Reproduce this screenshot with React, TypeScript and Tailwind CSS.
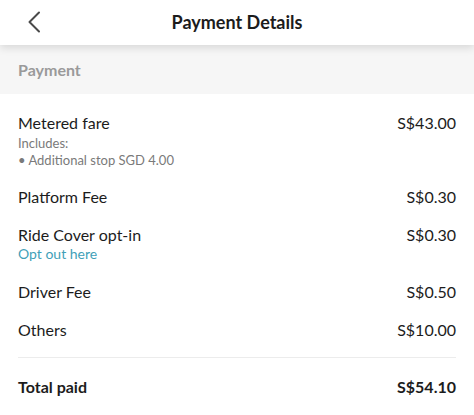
export default function App() {
  const font = { fontFamily: "Lato, 'Noto Sans', sans-serif" };
  return (
    <div className="w-[474px] h-[415px] overflow-hidden bg-white text-[#1c1c1c]" style={font}>
      <div className="relative z-10 flex h-[45px] items-center justify-center bg-white shadow-[0_3px_8px_rgba(0,0,0,0.12)]">
        <svg className="absolute left-[26px] top-[11px]" width="18" height="22" viewBox="0 0 18 22" fill="none">
          <path d="M13 1.5 L3.5 11 L13 20.5" stroke="#4a4a4a" strokeWidth="2" strokeLinecap="round" strokeLinejoin="round" />
        </svg>
        <h1 className="text-[18px] font-bold">Payment Details</h1>
      </div>
      <div className="flex h-[49px] items-center bg-[#f6f6f6] px-[18px]">
        <span className="text-[16px] font-bold text-[#9a9a9a]">Payment</span>
      </div>
      <div className="px-[18px] pt-[19px]">
        <div className="flex justify-between text-[16px] leading-[20px]">
          <span>Metered fare</span>
          <span>S$43.00</span>
        </div>
        <div className="mt-[2px] text-[13px] leading-[17px] text-[#7a7a7a]">Includes:</div>
        <div className="text-[13px] leading-[17px] text-[#7a7a7a]">• Additional stop SGD 4.00</div>
        <div className="mt-[18px] flex justify-between text-[16px] leading-[20px]">
          <span>Platform Fee</span>
          <span>S$0.30</span>
        </div>
        <div className="mt-[18px] flex justify-between text-[16px] leading-[20px]">
          <span>Ride Cover opt-in</span>
          <span>S$0.30</span>
        </div>
        <div className="text-[14px] leading-[18px] text-[#3f9fb8]">Opt out here</div>
        <div className="mt-[19px] flex justify-between text-[16px] leading-[20px]">
          <span>Driver Fee</span>
          <span>S$0.50</span>
        </div>
        <div className="mt-[18px] flex justify-between text-[16px] leading-[20px]">
          <span>Others</span>
          <span>S$10.00</span>
        </div>
        <div className="mt-[17px] h-px bg-[#ececec]" />
        <div className="mt-[19px] flex justify-between text-[16px] font-bold leading-[20px]">
          <span>Total paid</span>
          <span>S$54.10</span>
        </div>
      </div>
    </div>
  );
}
